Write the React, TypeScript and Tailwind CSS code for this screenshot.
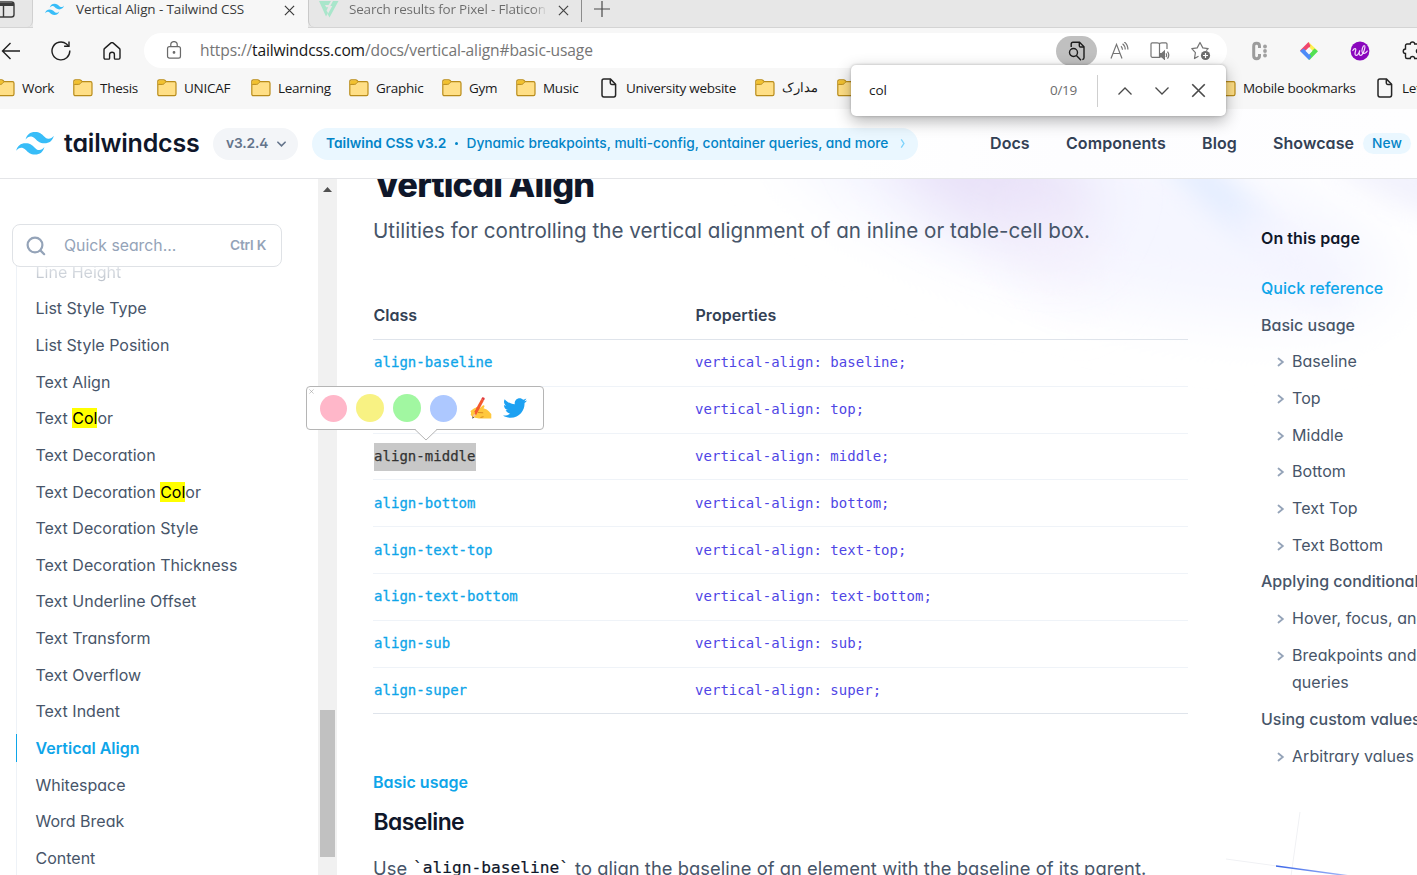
import { ReactNode } from 'react';
import { FaTwitter } from 'react-icons/fa';

const wave =
  'M27 0c-7.2 0-11.7 3.6-13.5 10.8 2.7-3.6 5.85-4.95 9.45-4.05 2.054.513 3.522 2.004 5.147 3.653C30.744 13.09 33.808 16.2 40.5 16.2c7.2 0 11.7-3.6 13.5-10.8-2.7 3.6-5.85 4.95-9.45 4.05-2.054-.513-3.522-2.004-5.147-3.653C36.756 3.11 33.692 0 27 0zM13.5 16.2C6.3 16.2 1.8 19.8 0 27c2.7-3.6 5.85-4.95 9.45-4.05 2.054.514 3.522 2.004 5.147 3.653C17.244 29.29 20.308 32.4 27 32.4c7.2 0 11.7-3.6 13.5-10.8-2.7 3.6-5.85 4.95-9.45 4.05-2.054-.513-3.522-2.004-5.147-3.653C23.256 19.31 20.192 16.2 13.5 16.2z';

function TailwindMark({ className }: { className: string }) {
  return (
    <svg viewBox="0 0 54 33" className={className} fill="#38bdf8">
      <path d={wave} />
    </svg>
  );
}

function Cross({ className }: { className: string }) {
  return (
    <svg viewBox="0 0 12 12" className={className} fill="none" stroke="currentColor" strokeWidth="1.3">
      <path d="M1 1l10 10M11 1L1 11" />
    </svg>
  );
}

function Folder() {
  return (
    <svg viewBox="0 0 20 18" className="h-[18px] w-5 shrink-0">
      <path d="M.8 2.5c0-1 .6-1.7 1.6-1.7h4.2c.7 0 1 .2 1.5.7l1 1.1h8.3c1 0 1.6.7 1.6 1.6v10.9c0 1-.6 1.6-1.6 1.6h-15c-1 0-1.6-.6-1.6-1.6z" fill="#ffdf86" stroke="#b98c1a" strokeWidth="1.2" />
      <path d="M1.4 3c0-.9.4-1.5 1.3-1.5h3.8c.5 0 .8.1 1.2.5l.9 1-1.8 1.8c-.3.3-.6.5-1.1.5H1.4z" fill="#f2c12e" />
      <path d="M1.2 5.4h4.5c.6 0 .9-.2 1.3-.6l1.7-1.7" fill="none" stroke="#b98c1a" strokeWidth="1" />
    </svg>
  );
}

function PageIcon() {
  return (
    <svg viewBox="0 0 16 20" className="h-5 w-4 shrink-0" fill="none" stroke="#262626" strokeWidth="1.5">
      <path d="M1 3c0-1.100.7-1.900 1.800-1.900H9.500L14.600 6.300v10.800c0 1.100-.7 1.800-1.800 1.800H2.800C1.700 18.900 1 18.200 1 17.100z" />
      <path d="M9.300 1.200v3.900c0 .9.500 1.400 1.400 1.400h3.900" />
    </svg>
  );
}

function TabBar() {
  return (
    <div className="flex h-7 shrink-0 border-b border-[#d4d4d4] bg-[#e7e7e7] text-[13.5px]">
      <div className="flex w-[33px] shrink-0 items-start rounded-br-md border-r border-[#d0d0d0]">
        <svg viewBox="0 0 16 18" className="-ml-px h-[18px] w-4" fill="none" stroke="#3b3b3b" strokeWidth="1.4">
          <rect x="-5" y="2" width="20" height="15" rx="2.500" />
          <path d="M-5 4.500h20" strokeWidth="3" />
          <path d="M4.500 6v11" />
        </svg>
      </div>
      <div className="flex h-7 w-[275px] shrink-0 bg-[#f7f7f7] text-[#3a3a3a]">
        <TailwindMark className="ml-3 mt-[3px] h-[13px] w-[19px]" />
        <span className="ml-3 w-[208px] shrink-0 leading-[19px] tracking-[-0.12px]">Vertical Align - Tailwind CSS</span>
        <Cross className="mt-[5px] h-[11px] w-[11px]" />
      </div>
      <div className="flex w-[274px] shrink-0 rounded-bl-md border-l border-[#c9c9c9] text-[#6b6b6b]">
        <svg viewBox="0 0 20 18" className="ml-[10px] h-[18px] w-5" fill="#a9e6cb">
          <path d="M0 1h12l-2.500 4H6l1.200 2.200h2L7.500 10.500 9 13l-2 3.500z" />
          <path d="M14 1h5.500L10.500 17.500 8.700 14.200l4.600-8.200h-2z" />
        </svg>
        <span className="ml-[10px] w-[209px] bg-[linear-gradient(90deg,#6b6b6b_88%,#d8d8d8_94%)] bg-clip-text leading-[19px] tracking-[-0.2px] text-transparent">
          Search results for Pixel - Flaticon
        </span>
        <Cross className="mt-[5px] h-[11px] w-[11px] text-[#444]" />
      </div>
      <div className="-ml-px h-[22px] w-px bg-[#8c8c8c]" />
      <svg viewBox="0 0 16 16" className="ml-3 mt-px h-4 w-4" stroke="#4a4a4a" strokeWidth="1.2">
        <path d="M8 0v16M0 8h16" />
      </svg>
    </div>
  );
}

function Toolbar() {
  return (
    <div className="flex h-[45px] shrink-0 items-center bg-[#f7f7f7]">
      <svg viewBox="0 0 20 18" className="ml-px h-[18px] w-5 shrink-0" fill="none" stroke="#1f1f1f" strokeWidth="1.4">
        <path d="M19 9H1.500M9.500 1L1.500 9l8 8" />
      </svg>
      <svg viewBox="0 0 20 20" className="ml-[30px] h-5 w-5 shrink-0" fill="none" stroke="#1f1f1f" strokeWidth="1.4">
        <path d="M18.800 9.500A8.900 8.900 0 1 1 15.500 3l2 1.900" />
        <path d="M18 .5V5.300h-4.900" />
      </svg>
      <svg viewBox="0 0 18 18" className="ml-8 h-[18px] w-[18px] shrink-0" fill="none" stroke="#1f1f1f" strokeWidth="1.400">
        <path d="M1 7.800c0-.6.200-1 .7-1.400L8 .9c.6-.5 1.400-.5 2 0l6.300 5.500c.5.400.7.800.7 1.400v8c0 .9-.4 1.300-1.300 1.300H12.300c-.5 0-.9-.3-.9-.9v-3.800c0-1.300-.8-2.100-2.400-2.100s-2.400.8-2.400 2.100v3.800c0 .6-.4.9-.9.9H2.300c-.9 0-1.300-.4-1.300-1.300z" />
      </svg>
      <div className="ml-[23px] flex h-[35px] w-[1083px] shrink-0 items-center rounded-full bg-white pl-[22px]">
        <svg viewBox="0 0 16 20" className="h-[19px] w-4" fill="none" stroke="#6a6a6a" strokeWidth="1.300">
          <rect x="1.200" y="6" width="13.600" height="12" rx="2" />
          <path d="M4.600 6V4a3.400 3.400 0 0 1 6.800 0v2" />
          <circle cx="8" cy="12" r=".8" fill="#444" />
        </svg>
        <span className="ml-[18px] w-[856px] pt-px text-[15.6px] leading-none tracking-[-0.14px] text-[#757575]">
          https://<span className="text-[#161616]">tailwindcss.com</span>/docs/vertical-align#basic-usage
        </span>
        <div className="flex h-[30px] w-[41px] items-center justify-center rounded-full bg-[#c0c0c0]">
          <svg viewBox="0 0 18 20" className="h-5 w-[18px]" fill="none" stroke="#1c1c1c" strokeWidth="1.400">
            <path d="M3.200 6V3c0-1.200.6-1.800 1.800-1.800h6.500l4.500 4.600v11c0 1.100-.6 1.700-1.700 1.700" />
            <path d="M11.300 1.300v3.500c0 .8.5 1.200 1.200 1.200h3.500" />
            <circle cx="5.500" cy="11.500" r="4" />
            <path d="M8.400 14.500l4.600 4.700" />
          </svg>
        </div>
        <svg viewBox="0 0 20 18" className="ml-[13px] h-[18px] w-5" fill="none" stroke="#757575" strokeWidth="1.200">
          <path d="M1 16.500L6.500 2.300 12 16.500M3 11.500h7" />
          <path d="M11 4.200c1 .9 1.400 2.100 1.500 3.600M12.600 1.700c1.800 1.400 2.600 3.300 2.600 5.800M14.300 0c2.600 1.900 3.600 4.400 3.600 7.500" />
        </svg>
        <svg viewBox="0 0 20 19" className="ml-5 h-[19px] w-5" fill="none" stroke="#757575" strokeWidth="1.200">
          <path d="M9.500 15.500v.8H2.200c-.7 0-1.200-.5-1.200-1.200V3c0-.7.500-1.200 1.200-1.200h5c1.400 0 2.300.5 2.300 1.200 0-.7.9-1.200 2.300-1.200h4c.7 0 1.200.5 1.200 1.200v5M9.500 3v12.500" />
          <path d="M10 12.500h1.800l2.600-2.300v8l-2.600-2.300H10z" fill="#757575" />
          <path d="M16 12.300c.8 1.200.8 2.500 0 3.700M17.500 10.600c1.700 2.300 1.700 4.700 0 7" />
        </svg>
        <svg viewBox="0 0 20 20" className="ml-[21px] h-5 w-5" fill="none" stroke="#757575" strokeWidth="1.200">
          <path d="M7.500 15.200l-4 2.300.9-5.900L.8 7.700l5.400-.8L9 1.500l2.800 5.400 5.400.8-2 2" strokeLinejoin="round" />
          <circle cx="14.500" cy="14.500" r="4.600" fill="#6d6d6d" stroke="none" />
          <path d="M14.500 12v5M12 14.500h5" stroke="#fff" />
        </svg>
      </div>
      <svg viewBox="0 0 18 20" className="ml-6 h-5 w-[18px] shrink-0" fill="none">
        <path d="M8.500 7V5.200c0-1.900-.9-2.900-2.900-2.900s-2.900 1-2.900 2.900v9.600c0 1.900.9 2.900 2.900 2.900s2.900-1 2.900-2.900V13" stroke="#9c9c9c" strokeWidth="3" />
        <g fill="#a0a0a0">
          <circle cx="14" cy="5.500" r="1.900" />
          <circle cx="14" cy="10" r="1.900" />
          <circle cx="14" cy="14.500" r="1.900" />
        </g>
      </svg>
      <svg viewBox="0 0 20 20" className="ml-[30px] h-5 w-5 shrink-0">
        <path d="M1 9.500L9.500 1l3 3.600-5.300 5.200-2.700 2.600z" fill="#f0466c" />
        <path d="M9.500 1L18.500 9.500l-3.300 2.900-5.300-5.300 1.800-1.900z" fill="#fdf14f" />
        <path d="M19 10.200L10.500 19l-2.900-3.700 5-5 3-2.900z" fill="#52e052" />
        <path d="M1 10l3.700-2.500 5.600 5.300 1.800 2.500L10 19z" fill="#4d8bf8" />
        <path d="M10 6.200l3.600 3.600-3.600 3.700-3.600-3.700z" fill="#f7f7f7" />
      </svg>
      <svg viewBox="0 0 20 20" className="ml-[31px] h-5 w-5 shrink-0" fill="none">
        <circle cx="10" cy="10" r="9.400" fill="#8a06bd" />
        <path d="M2.800 9.500c1.500-2.600 3.700-2.300 2.800.2-.8 2.500-.9 5 .9 4.700 1.800-.2 2.700-3 3.300-5-1 3-.7 5 .8 5 2.600 0 5.500-9.600 3.800-9.900-1.500-.3-3.300 5.800-2 7.400 1.200 1.300 3.500.1 4.800-1.800" stroke="#f3dcfb" strokeWidth="1.200" strokeLinecap="round" />
      </svg>
      <svg viewBox="0 0 22 20" className="ml-8 h-5 w-[22px] shrink-0" fill="none" stroke="#222" strokeWidth="1.400">
        <path d="M5 3h3.300c.1-2.700 4.300-2.700 4.400 0h4.500v14.500h-4.500c-.1-2.600-4.300-2.600-4.400 0H5c-.8 0-1.500-.7-1.500-1.500V12.500c-3-.1-3-4.400 0-4.500V4.500C3.500 3.700 4.200 3 5 3zM17 8c-3.500 0-3.500 4.200 0 4.200" />
      </svg>
    </div>
  );
}

type Mark = { label: string; cell: string; page?: boolean };
const bookmarks: Mark[] = [
  { label: 'Work', cell: 'w-[78px]' },
  { label: 'Thesis', cell: 'w-[84px]' },
  { label: 'UNICAF', cell: 'w-[94px]' },
  { label: 'Learning', cell: 'w-[98px]' },
  { label: 'Graphic', cell: 'w-[93px]' },
  { label: 'Gym', cell: 'w-[74px]' },
  { label: 'Music', cell: 'w-[84px]' },
  { label: 'University website', cell: 'w-[155px]', page: true },
  { label: 'مدارک', cell: 'w-[82px] text-[12.5px]' },
  { label: '', cell: 'w-[379px]' },
  { label: 'Mobile bookmarks', cell: 'w-[160px]' },
  { label: 'Let', cell: 'w-[60px]', page: true },
];

function Bookmarks() {
  return (
    <div className="flex h-9 shrink-0 items-center overflow-hidden bg-[#f7f7f7] pb-[6px] text-[13.5px] tracking-[-0.27px] text-[#1a1a1a]">
      {bookmarks.map((b, i) => (
        <div key={i} className={`flex shrink-0 items-center whitespace-nowrap first:-ml-[5px] ${b.cell} ${b.page ? 'gap-[9px] pl-px' : 'gap-[7px]'}`}>
          {b.page ? <PageIcon /> : <Folder />}
          {b.label && <span className="-mt-px leading-5">{b.label}</span>}
        </div>
      ))}
    </div>
  );
}

function SiteHeader() {
  return (
    <header className="flex h-[70px] shrink-0 items-center border-b border-[#e4e5e8] bg-[linear-gradient(90deg,#fff_60%,#fdfdff_75%,#fefeff)] font-['Inter',sans-serif] font-semibold text-[#334155] [font-feature-settings:'cv02','cv03','cv04','cv11']">
      <TailwindMark className="ml-4 h-[23px] w-[38px]" />
      <span className="ml-[10px] w-[149px] text-[25px] leading-none tracking-[-0.2px] text-[#0f172a]">tailwindcss</span>
      <div className="flex h-8 w-[85px] items-center rounded-full bg-[#f3f5f8] pl-[13px] text-[13.75px] tracking-[-0.1px] text-[#64748b]">
        <span>v3.2.4</span>
        <svg viewBox="0 0 10 6" className="ml-[9px] h-[6px] w-[9px]" fill="none" stroke="currentColor" strokeWidth="1.800" strokeLinecap="round">
          <path d="M1 1l4 4 4-4" />
        </svg>
      </div>
      <div className="ml-[14px] flex h-8 w-[606px] items-center whitespace-nowrap rounded-full bg-[#eaf7ff] pl-[14px] text-[13.75px] text-[#0284c7]">
        <span className="w-[129px]">Tailwind CSS v3.2</span>
        <span className="size-[2.500px] rounded-full bg-[#0284c7]" />
        <span className="ml-[9px] font-medium">Dynamic breakpoints, multi-config, container queries, and more</span>
        <svg viewBox="0 0 6 10" className="ml-3 h-[9px] w-[6px]" fill="none" stroke="#7dd3fc" strokeWidth="1.500">
          <path d="M1 0.500l3 4.500-3 4.500" />
        </svg>
      </div>
      <nav className="-mt-px ml-[72px] flex items-center text-[16px] tracking-[0.08px]">
        <span className="w-[76px]">Docs</span>
        <span className="w-[136px]">Components</span>
        <span className="w-[71px]">Blog</span>
        <span className="w-[90px]">Showcase</span>
        <span className="flex h-[21px] w-12 items-center justify-center rounded-full bg-[#eaf7ff] text-[13.75px] font-medium text-[#0284c7]">New</span>
      </nav>
    </header>
  );
}

const Hit = () => <mark className="bg-[#ff0] text-black">Col</mark>;

const links: ReactNode[] = [
  'Line Height',
  'List Style Type',
  'List Style Position',
  'Text Align',
  <>Text <Hit />or</>,
  'Text Decoration',
  <>Text Decoration <Hit />or</>,
  'Text Decoration Style',
  'Text Decoration Thickness',
  'Text Underline Offset',
  'Text Transform',
  'Text Overflow',
  'Text Indent',
  'Vertical Align',
  'Whitespace',
  'Word Break',
  'Content',
];

function Sidebar() {
  return (
    <aside className="flex w-[318px] shrink-0 flex-col overflow-hidden pl-3 pt-[45px] text-[16px] text-[#475569]">
      <div className="z-10 flex h-[43px] w-[270px] shrink-0 items-center rounded-lg border border-[#dfe2e6] bg-white pl-[14px] text-[#94a3b8]">
        <svg viewBox="0 0 20 20" className="-ml-px h-5 w-5" fill="none" stroke="currentColor" strokeWidth="2.200" strokeLinecap="round">
          <circle cx="9" cy="9" r="7.400" />
          <path d="M14.600 14.600l3.600 3.600" />
        </svg>
        <span className="ml-[18px] w-[166px] text-[15.8px]">Quick search...</span>
        <span className="text-[13.75px] font-semibold tracking-[-0.2px]">Ctrl K</span>
      </div>
      <ul className="-mt-[13.600px] ml-1 shrink-0 border-l border-[#eef2f7]">
        {links.map((l, i) => (
          <li key={i} className="flex h-[36.65px] items-center">
            <span
              className={
                i === 13
                  ? '-ml-px border-l border-[#0ea5e9] pl-[18.500px] font-semibold leading-7 text-[#0ea5e9]'
                  : i === 0
                    ? 'bg-[linear-gradient(#475569_0%,#e8ebef_20%,#b0b7c1_100%)] bg-clip-text pl-[18.500px] leading-7 text-transparent'
                    : 'pl-[18.500px] leading-7'
              }
            >
              {l}
            </span>
          </li>
        ))}
      </ul>
    </aside>
  );
}

const rows = ['baseline', 'top', 'middle', 'bottom', 'text-top', 'text-bottom', 'sub', 'super'];

function Article() {
  return (
    <main className="ml-9 flex w-[815px] shrink-0 flex-col">
      <h1 className="-mt-[15px] h-[42px] shrink-0 whitespace-nowrap pl-px text-[34.4px] font-extrabold leading-[42px] tracking-[-0.86px] text-[#0f172a]">Vertical Align</h1>
      <p className="mt-[9px] h-8 whitespace-nowrap text-[20.64px] leading-8 tracking-[0.02px] text-[#475569]">
        Utilities for controlling the vertical alignment of an inline or table-cell box.
      </p>
      <div className="mt-[45px] flex h-[48px] shrink-0 items-center border-b border-[#dfe4eb] pb-[2px] pl-[0.500px] font-semibold text-[#334155]">
        <span className="w-[322px]">Class</span>
        <span className="tracking-[0.05px]">Properties</span>
      </div>
      {rows.map((r, i) => (
        <div
          key={r}
          className="flex h-[46.8px] shrink-0 items-center border-b border-[#eff3f8] font-['DejaVu_Sans_Mono',monospace] text-[14px] tracking-[0.03px] last-of-type:border-[#dfe4eb]"
        >
          <span className="w-[322px]">
            <span
              className={
                i === 2
                  ? 'ml-px mt-[2px] inline-block h-[28px] bg-[#c8c8c8] leading-[27px] text-[#333] [-webkit-text-stroke:0.25px]'
                  : 'pl-px text-[#0ea5e9] [-webkit-text-stroke:0.3px]'
              }
            >
              align-{r}
            </span>
          </span>
          <span className="text-[#4f46e5]">vertical-align: {r};</span>
        </div>
      ))}
      <h2 className="mt-[54px] h-7 shrink-0 font-semibold leading-7 text-[#0ea5e9]">Basic usage</h2>
      <h3 className="mt-[10px] h-8 shrink-0 pl-[0.500px] text-[22.9px] font-semibold leading-8 tracking-[-0.55px] text-[#0f172a]">Baseline</h3>
      <p className="mt-[14px] flex h-8 shrink-0 whitespace-nowrap text-[18.33px] leading-8 tracking-[0.06px] text-[#475569]">
        <span className="w-10">Use</span>
        <code className="w-[162px] font-['DejaVu_Sans_Mono',monospace] text-[16.2px] tracking-normal text-[#0f172a] [-webkit-text-stroke:0.2px]">`align-baseline`</code>
        <span>to align the baseline of an element with the baseline of its parent.</span>
      </p>
    </main>
  );
}

const toc: { text: string; sub?: boolean }[] = [
  { text: 'Basic usage' },
  { text: 'Baseline', sub: true },
  { text: 'Top', sub: true },
  { text: 'Middle', sub: true },
  { text: 'Bottom', sub: true },
  { text: 'Text Top', sub: true },
  { text: 'Text Bottom', sub: true },
  { text: 'Applying conditionally' },
  { text: 'Hover, focus, and', sub: true },
  { text: 'Breakpoints and\nqueries', sub: true },
  { text: 'Using custom values' },
  { text: 'Arbitrary values', sub: true },
];

function Toc() {
  return (
    <aside className="ml-[73px] flex min-w-0 flex-1 flex-col gap-[9.170px] overflow-hidden pt-[46px] leading-[27.500px] text-[#475569]">
      <div className="mb-[13.500px] whitespace-nowrap font-semibold tracking-[0.08px] text-[#0f172a]">On this page</div>
      <div className="font-medium text-[#0ea5e9]">Quick reference</div>
      {toc.map((t) =>
        t.sub ? (
          <div key={t.text} className="flex gap-[7px] whitespace-pre pl-4 tracking-[0.05px]">
            <svg viewBox="0 0 8 10" className="mt-[9px] h-[10px] w-2 shrink-0" fill="none" stroke="#94a3b8" strokeWidth="1.800" strokeLinecap="round">
              <path d="M1.500 1.500L5.800 5 1.500 8.500" />
            </svg>
            <span>{t.text}</span>
          </div>
        ) : (
          <div key={t.text} className="whitespace-nowrap font-medium">{t.text}</div>
        ),
      )}
    </aside>
  );
}

function Backdrop() {
  return (
    <svg viewBox="0 0 1417 696" className="pointer-events-none absolute inset-0 -z-10 h-full w-full" fill="none">
      <defs>
        <filter id="soft" x="-60%" y="-100%" width="220%" height="300%"><feGaussianBlur stdDeviation="30" /></filter>
        <filter id="mid" x="-60%" y="-150%" width="220%" height="400%"><feGaussianBlur stdDeviation="14" /></filter>
        <linearGradient id="ray" x1="1276" y1="687" x2="1350" y2="697" gradientUnits="userSpaceOnUse">
          <stop stopColor="#3b66e8" /><stop offset="1" stopColor="#a9bdf8" />
        </linearGradient>
      </defs>
      <ellipse cx="1090" cy="30" rx="310" ry="85" fill="#f5f6ff" transform="rotate(14 1090 30)" filter="url(#soft)" />
      <ellipse cx="990" cy="-5" rx="110" ry="50" fill="#e8e0f8" transform="rotate(25 990 -5)" filter="url(#soft)" />
      <ellipse cx="1050" cy="65" rx="60" ry="25" fill="#f4effc" transform="rotate(40 1050 65)" filter="url(#soft)" />
      <ellipse cx="1215" cy="12" rx="72" ry="16" fill="#e2ecff" transform="rotate(42 1215 12)" filter="url(#mid)" />
      <ellipse cx="1290" cy="80" rx="70" ry="18" fill="#f4f4ff" transform="rotate(42 1290 80)" filter="url(#mid)" />
      <ellipse cx="1405" cy="0" rx="90" ry="26" fill="#f2f2fd" transform="rotate(25 1405 0)" filter="url(#mid)" />
      <path d="M1300 633l-9 64M1226 680l51 7" stroke="#f0f1f4" />
      <path d="M1276 687l74 10" stroke="url(#ray)" strokeWidth="1.400" />
    </svg>
  );
}

function FindBar() {
  return (
    <div className="absolute left-[851px] top-[65px] z-20 flex h-[51px] w-[375px] items-center rounded-[5px] bg-white pl-[18px] text-[13.5px] shadow-[0_5px_16px_rgba(0,0,0,0.3),0_0_3px_rgba(0,0,0,0.25)]">
      <span className="w-[181px] text-[#1a1a1a]">col</span>
      <span className="w-[47px] tracking-[-0.3px] text-[#6d6d6d]">0/19</span>
      <span className="h-8 w-px bg-[#cfcfcf]" />
      <svg viewBox="0 0 14 8" className="ml-5 h-2 w-[14px]" fill="none" stroke="#4a4a4a" strokeWidth="1.300"><path d="M.5 7.500L7 1l6.500 6.500" /></svg>
      <svg viewBox="0 0 14 8" className="ml-[23px] h-2 w-[14px]" fill="none" stroke="#4a4a4a" strokeWidth="1.300"><path d="M.5.500L7 7 13.500.5" /></svg>
      <Cross className="ml-[22px] h-[15px] w-[15px] text-[#4a4a4a]" />
    </div>
  );
}

function HighlightMenu() {
  return (
    <div className="absolute left-[306px] top-[386px] z-20 flex h-[44px] w-[238px] items-center rounded-[4px] border border-[#b5b5b5] bg-white pl-[13px]">
      <Cross className="absolute left-[2px] top-[2px] h-[5px] w-[5px] text-[#999]" />
      <span className="size-[27px] rounded-full bg-[#ffb7c9]" />
      <span className="ml-[9px] size-[28px] rounded-full bg-[#f8f283]" />
      <span className="ml-[9px] size-[28px] rounded-full bg-[#a1f7a1]" />
      <span className="ml-[9px] size-[27px] rounded-full bg-[#adc8ff]" />
      <svg viewBox="0 0 24 24" className="ml-3 size-6">
        <path d="M2.500 15l5-4 3.500 1 2.500-2.300c1.300-1.100 2.600.2 1.800 1.300l-.8 1.300 3.200 1.200c1.800 1 3 2.800 4.600 4.500v4.500H10l-6.500-1.300C1.800 19 1.600 17 2.500 15z" fill="#ffc83d" />
        <path d="M9 16.500l5.200.3M11.500 21.500l3-.8" stroke="#d98a1f" strokeWidth="1" />
        <path d="M3.600 21.300l.8-3.800L12.300 3l2.600 1.400-7.600 14.400z" fill="#f4592f" />
        <path d="M12.300 3l.7-1.300c.7-1.100 3.200.1 2.700 1.400L14.900 4.400z" fill="#e23b3b" />
        <path d="M4.400 17.500l2.900 1.500-3.700 3z" fill="#f9c9a0" />
        <path d="M3.700 20.500l-.4 2.200 1.800-1.300z" fill="#333" />
        <path d="M2.500 15.500l3-2.300M2.700 18.500l2.500-1.500" stroke="#ffc83d" strokeWidth="2" strokeLinecap="round" />
      </svg>
      <FaTwitter className="ml-[10px] size-6 text-[#1da1f2]" />
      <svg viewBox="0 0 24 13" className="absolute left-[107px] top-[41px] h-[13px] w-6">
        <path d="M0 0L12 11.500 24 0z" fill="#fff" />
        <path d="M0 1.500h1L12 12 23 1.500h1" fill="none" stroke="#b5b5b5" />
      </svg>
    </div>
  );
}

export default function App() {
  return (
    <div className="relative flex h-[875px] w-[1417px] flex-col overflow-hidden bg-white font-['Open_Sans',sans-serif]">
      <TabBar />
      <Toolbar />
      <Bookmarks />
      <SiteHeader />
      <div className="relative isolate flex min-h-0 flex-1 overflow-hidden font-['Inter',sans-serif] [font-feature-settings:'cv02','cv03','cv04','cv11']">
        <Backdrop />
        <Sidebar />
        <div className="flex w-[19px] shrink-0 flex-col items-center bg-[#f1f1f1]">
          <svg viewBox="0 0 9 5" className="mt-2 h-[5px] w-[9px]" fill="#505050"><path d="M4.500 0L9 5H0z" /></svg>
          <div className="mt-[518px] h-[147px] w-[15px] bg-[#c1c1c1]" />
        </div>
        <Article />
        <Toc />
      </div>
      <FindBar />
      <HighlightMenu />
    </div>
  );
}
